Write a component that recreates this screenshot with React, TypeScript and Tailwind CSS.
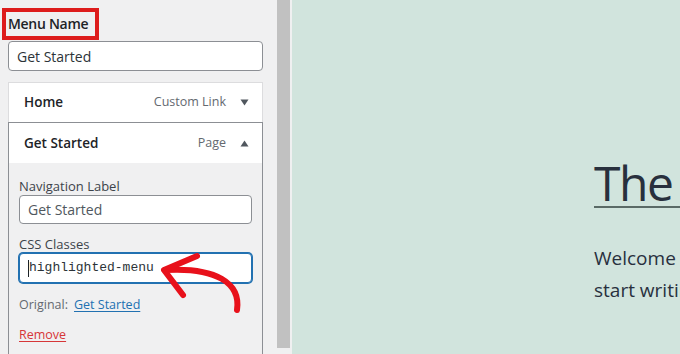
import React from "react";

const Caret = ({ up }: { up?: boolean }) => (
  <svg width="9" height="7" viewBox="0 0 9 7" className="shrink-0">
    {up ? <path d="M0.5 6.5 L4.5 0.5 L8.5 6.5 Z" fill="#50575e" /> : <path d="M0.5 0.5 L8.5 0.5 L4.5 6.5 Z" fill="#50575e" />}
  </svg>
);

const App = () => {
  return (
    <div
      className="relative flex h-[354px] w-[680px] overflow-hidden"
      style={{ fontFamily: '"Open Sans", "Noto Sans", Arial, sans-serif' }}
    >
      {/* menu settings column */}
      <div className="w-[277px] shrink-0 bg-[#f0f0f1] pl-2 pr-[14px]">
        <div className="relative pt-[13px] pb-[7px]">
          <div className="text-[14px] leading-[21px] font-semibold text-[#1d2327] tracking-[-0.3px]">Menu Name</div>
          <div className="absolute left-[-6px] top-[8px] h-[32px] w-[97px] border-[4px] border-[#dd1c1c]" />
        </div>
        <div className="flex h-[30px] items-center rounded-[4px] border border-[#8c8f94] bg-white px-2 text-[14px] text-[#2c3338]">
          Get Started
        </div>

        <div className="mt-[11px]">
          <div className="flex h-[40px] items-center border-x border-t border-[#dcdcde] bg-white pl-[15px] pr-[13px]">
            <span className="flex-1 text-[13.5px] font-semibold text-[#1d2327]">Home</span>
            <span className="mr-[14px] text-[12.5px] text-[#646970]">Custom Link</span>
            <Caret />
          </div>

          <div className="border border-[#8c8f94]">
            <div className="flex h-[40px] items-center bg-white pl-[15px] pr-[13px]">
              <span className="flex-1 text-[13.5px] font-semibold text-[#1d2327]">Get Started</span>
              <span className="mr-[14px] text-[12.5px] text-[#646970]">Page</span>
              <Caret up />
            </div>
            <div className="h-[200px] bg-[#f0f0f1] pl-[10px] pr-[10px] pt-[14px] text-[13px] text-[#3c434a]">
              <div className="leading-[18px]">Navigation Label</div>
              <div className="flex h-[29px] items-center rounded-[4px] border border-[#8c8f94] bg-white px-2 text-[14px] text-[#50575e]">
                Get Started
              </div>
              <div className="mt-[11px] leading-[18px]">CSS Classes</div>
              <div className="flex h-[30px] items-center rounded-[4px] border border-[#2271b1] bg-white pl-[8px] shadow-[0_0_0_1px_#2271b1]">
                <span className="h-[17px] w-px bg-[#1d2327]" />
                <span className="text-[13px] text-[#2c3338]" style={{ fontFamily: '"Liberation Mono", monospace' }}>
                  highlighted-menu
                </span>
              </div>
              <div className="mt-[13px] flex text-[12.5px] leading-[18px]">
                <span className="text-[#646970]">Original:</span>
                <span className="ml-[6px] text-[#2271b1] underline underline-offset-2">Get Started</span>
              </div>
              <div className="mt-[12px] text-[12.5px] leading-[18px] text-[#d63638] underline underline-offset-2">Remove</div>
            </div>
          </div>
        </div>
      </div>

      {/* scrollbar */}
      <div className="w-[15px] shrink-0 bg-[#f0f0f1]">
        <div className="h-[348px] w-[13px] bg-[#c1c1c1]" />
      </div>

      {/* page preview */}
      <div className="flex-1 bg-[#d1e4dd] pl-[302px] pt-[159px] text-[#28303d]">
        <div className="h-[49px] w-[200px] border-b-2 border-[#5a6a66] whitespace-nowrap text-[48px] leading-none font-normal tracking-[-1.5px]">
          The
        </div>
        <div className="mt-[34px] w-[200px] whitespace-nowrap text-[19px] leading-[32px]">
          <div>Welcome to WordPress.</div>
          <div>start writing!</div>
        </div>
      </div>

      {/* red annotation arrow */}
      <svg className="pointer-events-none absolute left-0 top-0" width="680" height="354" viewBox="0 0 680 354">
        <g fill="none" stroke="#e8111b" strokeWidth="6" strokeLinecap="round" strokeLinejoin="round">
          <path d="M237 310 C241 283 216 267 165 270" />
          <path d="M197 256 L164 270 L183 295" />
        </g>
      </svg>
    </div>
  );
};

export default App;
